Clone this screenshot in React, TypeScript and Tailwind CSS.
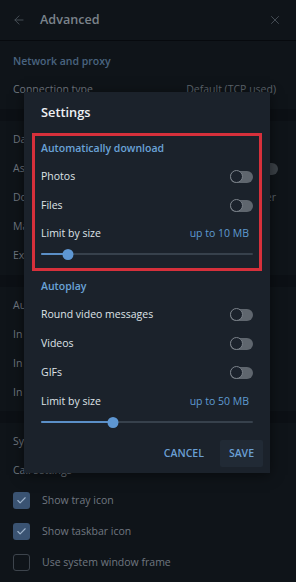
import { ArrowLeft, X, Check } from "lucide-react";

function Toggle() {
  return (
    <div className="relative w-[23px] h-[12px]">
      <div className="absolute inset-0 rounded-full bg-[#5f666e]" />
      <div className="absolute left-0 top-[-0.5px] w-[13px] h-[13px] rounded-full bg-[#1b222c] border-[1.5px] border-[#7b828a]" />
    </div>
  );
}

function Slider({ pct }: { pct: number }) {
  return (
    <div className="relative h-[12px] flex items-center">
      <div className="w-full h-[2px] bg-[#37414c] rounded-full" />
      <div className="absolute left-0 h-[2px] bg-[#5b8fc7] rounded-full" style={{ width: `${pct}%` }} />
      <div
        className="absolute w-[11px] h-[11px] rounded-full bg-[#5e97d3] -translate-x-1/2"
        style={{ left: `${pct}%` }}
      />
    </div>
  );
}

function Row({ label }: { label: string }) {
  return (
    <div className="h-[29px] flex items-center justify-between">
      <span className="text-[10.5px] text-[#dfe3e8]">{label}</span>
      <Toggle />
    </div>
  );
}

function BgRow({ label, right }: { label: string; right?: React.ReactNode }) {
  return (
    <div className="h-[29px] flex items-center justify-between pl-[13px] pr-[20px]">
      <span className="text-[10.5px] text-[#6f7780]">{label}</span>
      {right}
    </div>
  );
}

function CheckRow({ label, checked }: { label: string; checked: boolean }) {
  return (
    <div className="h-[31px] flex items-center gap-[12px] px-[13px]">
      {checked ? (
        <div className="w-[17px] h-[17px] rounded-[3px] bg-[#3a5372] flex items-center justify-center">
          <Check size={11} strokeWidth={2.5} className="text-[#9fb4cb]" />
        </div>
      ) : (
        <div className="w-[17px] h-[17px] rounded-[3px] border-[1.5px] border-[#3d444c]" />
      )}
      <span className="text-[10.5px] text-[#6f7780]">{label}</span>
    </div>
  );
}

export default function App() {
  return (
    <div
      className="relative w-[296px] h-[582px] overflow-hidden bg-[#0f1419]"
      style={{ fontFamily: '"Open Sans", sans-serif' }}
    >
      {/* background page */}
      <div className="flex flex-col">
        <div className="h-[41px] flex items-center pl-[12px] pr-[14px] border-b border-[#070a0e]">
          <ArrowLeft size={14} className="text-[#4d555d]" strokeWidth={1.5} />
          <span className="ml-[14px] text-[12.6px] font-semibold text-[#7b838b]">Advanced</span>
          <X size={14} className="ml-auto text-[#4d555d]" strokeWidth={1.5} />
        </div>
        <div className="pt-[7px]">
          <div className="h-[27px] flex items-center px-[13px]">
            <span className="text-[10.5px] font-semibold text-[#4a6480]">Network and proxy</span>
          </div>
          <BgRow label="Connection type" right={<span className="text-[10.5px] text-[#5d656d]">Default (TCP used)</span>} />
        </div>
        <div className="h-[12px] bg-[#0c1015] mt-[5px]" />
        <div className="pt-[4px]">
          <BgRow label="Data and storage" />
          <BgRow label="Ask download path" right={<div className="w-[20px] h-[12px] rounded-full bg-[#3c4248] mr-[-2px]" />} />
          <BgRow label="Download path" right={<span className="text-[10.5px] text-[#5d656d]">Folder</span>} />
          <BgRow label="Manage local storage" />
          <BgRow label="Export Telegram data" />
        </div>
        <div className="h-[12px] bg-[#0c1015] mt-[5px]" />
        <div className="pt-[4px]">
          <BgRow label="Automatic media download" />
          <BgRow label="In private chats" />
          <BgRow label="In groups" />
          <BgRow label="In channels" />
        </div>
        <div className="h-[12px] bg-[#0c1015] mt-[4px]" />
        <div className="pt-[4px]">
          <BgRow label="System integration" />
          <BgRow label="Call settings" />
          <CheckRow label="Show tray icon" checked />
          <CheckRow label="Show taskbar icon" checked />
          <CheckRow label="Use system window frame" checked={false} />
        </div>
      </div>

      {/* dialog */}
      <div className="absolute left-[24px] top-[92px] w-[246px] h-[381px] bg-[#1b222b] shadow-[0_2px_12px_rgba(0,0,0,0.5)] flex flex-col">
        <div className="px-[17px] pt-[7px] h-[41px]">
          <span className="text-[12.8px] font-semibold text-[#eef1f4]">Settings</span>
        </div>
        <div className="mx-[8px] border-[3px] border-[#d6303b] px-[6px] pt-[2px] pb-[8px]">
          <div className="h-[22px] flex items-center">
            <span className="text-[10.5px] font-semibold text-[#6aa2d8]">Automatically download</span>
          </div>
          <div className="h-[2px]" />
          <Row label="Photos" />
          <Row label="Files" />
          <div className="h-[28px] flex items-center justify-between">
            <span className="text-[10.5px] text-[#dfe3e8]">Limit by size</span>
            <span className="text-[10.5px] text-[#5f9bd2] mr-[4px]">up to 10 MB</span>
          </div>
          <Slider pct={12.5} />
        </div>
        <div className="px-[17px] pt-[5px]">
          <div className="h-[22px] flex items-center">
            <span className="text-[10.5px] font-semibold text-[#6aa2d8]">Autoplay</span>
          </div>
          <div className="h-[2px]" />
          <Row label="Round video messages" />
          <Row label="Videos" />
          <Row label="GIFs" />
          <div className="h-[28px] flex items-center justify-between mt-[1px]">
            <span className="text-[10.5px] text-[#dfe3e8]">Limit by size</span>
            <span className="text-[10.5px] text-[#5f9bd2] mr-[4px]">up to 50 MB</span>
          </div>
          <Slider pct={34} />
        </div>
        <div className="mt-auto mb-[6px] flex justify-end items-center gap-[8px] pr-[7px]">
          <span className="text-[10.5px] font-semibold text-[#6a9fd4] px-[8px]">CANCEL</span>
          <div className="h-[27px] px-[9px] flex items-center bg-[#212a35] rounded-[2px]">
            <span className="text-[10.5px] font-semibold text-[#6a9fd4]">SAVE</span>
          </div>
        </div>
      </div>
    </div>
  );
}
